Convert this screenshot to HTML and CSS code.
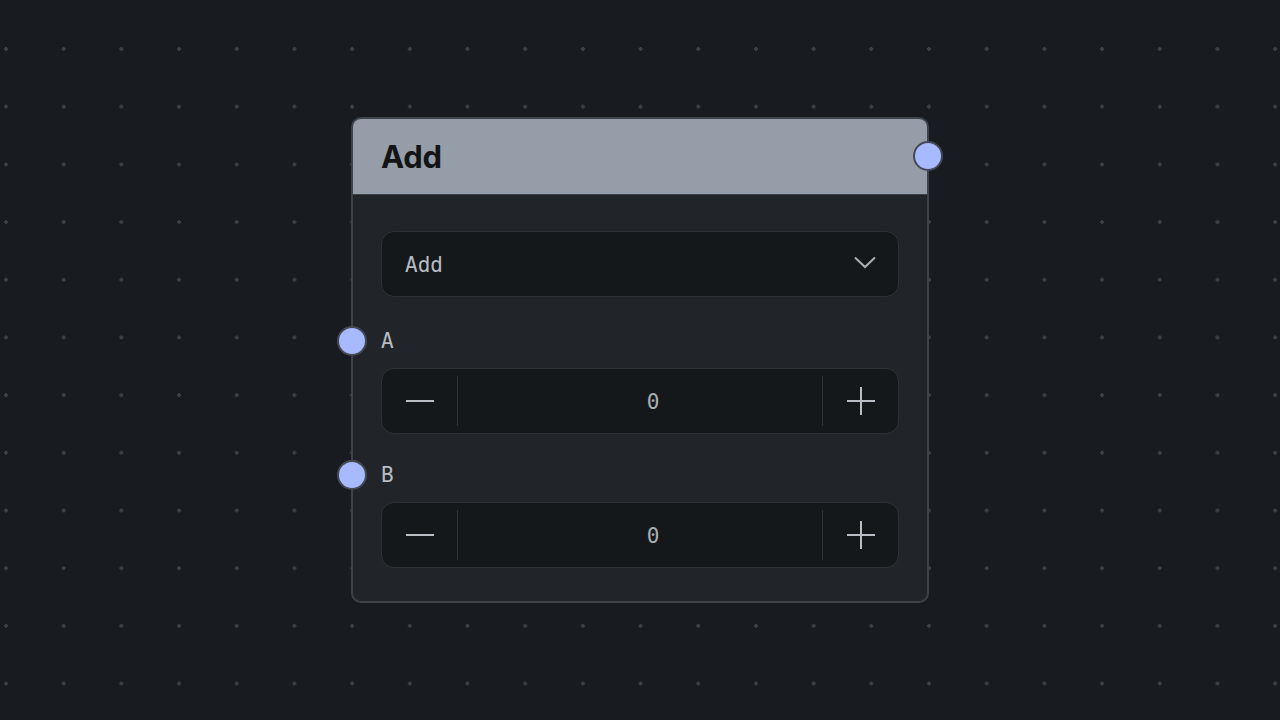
FILE: index.html
```html
<!DOCTYPE html>
<html lang="en">

<head>
    <meta charset="UTF-8">
    <meta name="viewport" content="width=device-width, initial-scale=1.0">
    <title>Add node</title>
    <link rel="stylesheet" href="styles.css">
</head>

<body>
    <div class="canvas">
        <div class="node">
            <div class="node-header">
                <span class="node-title">Add</span>
                <span class="handle handle-out"></span>
            </div>
            <div class="node-body">
                <div class="select">
                    <span>Add</span>
                    <svg class="chevron" width="22" height="13" viewBox="0 0 22 13">
                        <path d="M1 1.5 L11 11 L21 1.5" fill="none" stroke="currentColor" stroke-width="2" />
                    </svg>
                </div>

                <div class="field field-first">
                    <div class="field-label">
                        <span class="handle handle-in"></span>
                        A
                    </div>
                    <div class="stepper">
                        <button class="step">
                            <svg width="30" height="30" viewBox="0 0 30 30">
                                <path d="M1 15 H29" stroke="currentColor" stroke-width="2" />
                            </svg>
                        </button>
                        <div class="value">0</div>
                        <button class="step">
                            <svg width="30" height="30" viewBox="0 0 30 30">
                                <path d="M1 15 H29 M15 1 V29" stroke="currentColor" stroke-width="2" />
                            </svg>
                        </button>
                    </div>
                </div>

                <div class="field">
                    <div class="field-label">
                        <span class="handle handle-in"></span>
                        B
                    </div>
                    <div class="stepper">
                        <button class="step">
                            <svg width="30" height="30" viewBox="0 0 30 30">
                                <path d="M1 15 H29" stroke="currentColor" stroke-width="2" />
                            </svg>
                        </button>
                        <div class="value">0</div>
                        <button class="step">
                            <svg width="30" height="30" viewBox="0 0 30 30">
                                <path d="M1 15 H29 M15 1 V29" stroke="currentColor" stroke-width="2" />
                            </svg>
                        </button>
                    </div>
                </div>
            </div>
        </div>
    </div>
</body>

</html>
```

FILE: styles.css
```css
* {
    margin: 0;
    padding: 0;
    box-sizing: border-box;
}

html,
body {
    width: 100%;
    height: 100%;
}

body {
    background: #181b1f;
    font-family: "DejaVu Sans Mono", monospace;
    overflow: hidden;
}

/* dotted grid of the flow editor */
.canvas {
    position: relative;
    width: 1280px;
    height: 720px;
    background-color: #181b1f;
    background-image: radial-gradient(circle, #3d4147 1.6px, transparent 2.1px);
    background-size: 57.7px 57.7px;
    background-position: -22.85px 20.15px;
}

.node {
    position: absolute;
    left: 351px;
    top: 117px;
    width: 578px;
    background: #212428;
    border: 2px solid #3e4249;
    border-radius: 10px;
}

.node-header {
    position: relative;
    height: 76px;
    background: #959ea8;
    border-radius: 8px 8px 0 0;
    border-bottom: 1px solid #3e4249;
    display: flex;
    align-items: center;
    padding-left: 28px;
}

.node-title {
    font-family: Inter, "Liberation Sans", sans-serif;
    font-weight: 700;
    font-size: 31px;
    color: #121416;
    letter-spacing: -0.2px;
}

.node-body {
    padding: 36px 28px 33px 28px;
    display: flex;
    flex-direction: column;
    gap: 30px;
}

.handle {
    position: absolute;
    width: 30px;
    height: 30px;
    border-radius: 50%;
    background: #a7b9ff;
    border: 2px solid #454a52;
}

.handle-out {
    right: -16px;
    top: 22px;
}

.handle-in {
    left: -44px;
    top: -4px;
}

.select {
    height: 66px;
    background: #15181b;
    border: 1px solid #2e3238;
    border-radius: 13px;
    display: flex;
    align-items: center;
    justify-content: space-between;
    padding: 2px 22px 0 23px;
    font-size: 21px;
    color: #b7bcc2;
}

.chevron {
    color: #a9afb6;
    margin-top: -6px;
}

.field {
    display: flex;
    flex-direction: column;
    gap: 16px;
}

.field-first {
    margin-top: 3px;
}

.field-label {
    position: relative;
    height: 22px;
    line-height: 22px;
    font-size: 21px;
    color: #b7bcc2;
}

.stepper {
    height: 66px;
    background: #15181b;
    border: 1px solid #2e3238;
    border-radius: 13px;
    display: flex;
    align-items: stretch;
}

.step {
    width: 76px;
    flex: none;
    background: none;
    border: none;
    color: #b9bec4;
    display: flex;
    align-items: center;
    justify-content: center;
}

.step:first-child {
    border-right: 1px solid #2f3339;
}

.step:last-child {
    border-left: 1px solid #2f3339;
}

.step:first-child,
.step:last-child {
    margin: 7px 0;
}

.value {
    flex: 1;
    display: flex;
    align-items: center;
    justify-content: center;
    font-size: 21px;
    color: #a9aeb4;
    padding: 2px 0 0 26px;
}
```
